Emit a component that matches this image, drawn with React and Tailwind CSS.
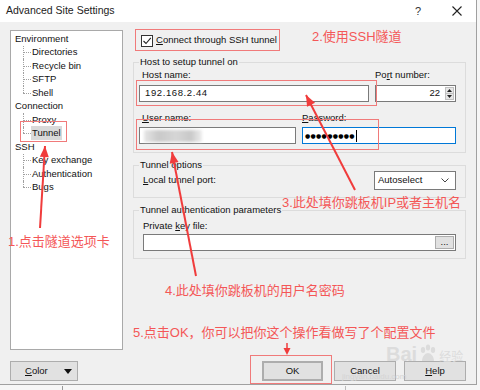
import React from "react";

const tree = [
  { label: "Environment", level: 0 },
  { label: "Directories", level: 1 },
  { label: "Recycle bin", level: 1 },
  { label: "SFTP", level: 1 },
  { label: "Shell", level: 1, last: true },
  { label: "Connection", level: 0 },
  { label: "Proxy", level: 1 },
  { label: "Tunnel", level: 1, last: true, selected: true },
  { label: "SSH", level: 0 },
  { label: "Key exchange", level: 1 },
  { label: "Authentication", level: 1 },
  { label: "Bugs", level: 1, last: true },
];

// arrow = line + filled head, pointing from -> to
const arrowHead = (x1, y1, x2, y2, len = 11, half = 4.5) => {
  const dx = x2 - x1;
  const dy = y2 - y1;
  const d = Math.hypot(dx, dy);
  const ux = dx / d;
  const uy = dy / d;
  const bx = x2 - ux * len;
  const by = y2 - uy * len;
  return `${x2},${y2} ${bx - uy * half},${by + ux * half} ${bx + uy * half},${by - ux * half}`;
};

const arrows = [
  [40, 228, 45, 146],
  [355, 190, 306, 95],
  [196, 276, 172, 152],
];

const Group = ({ title, className = "", children }) => (
  <div className={`relative border border-[#dcdcdc] ${className}`}>
    <span className="absolute left-[5px] top-[-7px] bg-[#f0f0f0] px-[1px] leading-[12px]">{title}</span>
    {children}
  </div>
);

const Btn = ({ children, className = "" }) => (
  <div className={`flex h-[20px] items-center justify-center border border-[#adadad] bg-[#e1e1e1] ${className}`}>
    {children}
  </div>
);

export default function App() {
  return (
    <div className="relative h-[390px] w-[480px] overflow-hidden bg-[#f6f6f6] font-['Liberation_Sans',Arial,sans-serif] text-[9.5px] text-[#111]">
      <div className="flex h-[385px] w-[477px] flex-col border-r border-b border-[#a0a0a0] bg-[#f0f0f0]">
        {/* Title bar */}
        <div className="flex h-[22px] items-center bg-white pl-[6px] pr-[14px]">
          <span className="text-[10.5px] text-[#222]">Advanced Site Settings</span>
          <span className="ml-auto mr-[31px] text-[11px] text-[#333]">?</span>
          <svg width="10" height="10" viewBox="0 0 10 10">
            <path d="M0.5 0.5 L9.5 9.5 M9.5 0.5 L0.5 9.5" stroke="#222" strokeWidth="1.1" />
          </svg>
        </div>

        <div className="flex flex-col px-[10px] pt-[8px]">
          <div className="flex gap-[10px]">
            {/* Tree */}
            <div className="h-[320px] w-[115px] border border-[#a9a9a9] bg-white pl-[4px] pt-[1px]">
              {tree.map((t) =>
                t.level === 0 ? (
                  <div key={t.label} className="flex h-[13.5px] items-center">
                    {t.label}
                  </div>
                ) : (
                  <div key={t.label} className="flex h-[13.5px] items-center">
                    <span className="relative ml-[8px] h-full w-[8px]">
                      <span
                        className={`absolute left-0 top-0 border-l border-dotted border-[#a0a0a0] ${
                          t.last ? "h-1/2" : "h-full"
                        }`}
                      />
                      <span className="absolute left-0 top-1/2 w-full border-t border-dotted border-[#a0a0a0]" />
                    </span>
                    <span className={`px-[1px] ${t.selected ? "bg-[#d9d9d9]" : ""}`}>{t.label}</span>
                  </div>
                )
              )}
            </div>

            {/* Right column */}
            <div className="flex w-[333px] flex-col">
              <div className="flex h-[21px] items-center pl-[8px]">
                <span className="flex h-[12px] w-[12px] items-center justify-center border border-[#333] bg-white">
                  <svg width="10" height="10" viewBox="0 0 10 10">
                    <path d="M1.5 5 L4 7.5 L8.8 1.8" fill="none" stroke="#222" strokeWidth="1.1" />
                  </svg>
                </span>
                <span className="ml-[3px]">
                  <u>C</u>onnect through SSH tunnel
                </span>
              </div>

              <Group title="Host to setup tunnel on" className="mt-[11px] pl-[5px] pr-[9px] pt-[6px] pb-[8px]">
                <div className="flex gap-[6px]">
                  <div className="flex w-[230px] flex-col">
                    <span className="h-[12px] pl-[3px] leading-[12px]">Host name:</span>
                    <div className="mt-[4px] flex h-[17px] items-center border border-[#7a7a7a] bg-white pl-[5px] tracking-[0.6px]">
                      192.168.2.44
                    </div>
                  </div>
                  <div className="flex w-[81px] flex-col">
                    <span className="h-[12px] leading-[12px]">
                      Po<u>r</u>t number:
                    </span>
                    <div className="mt-[4px] flex h-[17px] items-center border border-[#7a7a7a] bg-white pr-[1px]">
                      <span className="ml-auto mr-[5px]">22</span>
                      <div className="flex h-[13px] w-[9px] flex-col border border-[#c0c0c0] bg-[#e6e6e6]">
                        <div className="flex flex-1 items-center justify-center border-b border-[#c0c0c0]">
                          <svg width="5" height="3" viewBox="0 0 5 3">
                            <path d="M0 3 L2.5 0 L5 3 Z" fill="#222" />
                          </svg>
                        </div>
                        <div className="flex flex-1 items-center justify-center">
                          <svg width="5" height="3" viewBox="0 0 5 3">
                            <path d="M0 0 L2.5 3 L5 0 Z" fill="#222" />
                          </svg>
                        </div>
                      </div>
                    </div>
                  </div>
                </div>
                <div className="mt-[10px] flex gap-[6px]">
                  <div className="flex w-[157px] flex-col">
                    <span className="h-[12px] pl-[3px] leading-[12px]">
                      <u>U</u>ser name:
                    </span>
                    <div className="mt-[3px] flex h-[17px] items-center border border-[#7a7a7a] bg-white pl-[4px]">
                      <div className="h-[12px] w-[58px] bg-[linear-gradient(90deg,#e6e6e6,#c9c9c9_25%,#d6d6d6_55%,#c8c8c8_80%,#eeeeee)] blur-[1.5px]" />
                    </div>
                  </div>
                  <div className="flex w-[154px] flex-col">
                    <span className="h-[12px] leading-[12px]">
                      <u>P</u>assword:
                    </span>
                    <div className="mt-[3px] flex h-[17px] items-center border border-[#0078d7] bg-white pl-[2px]">
                      <span className="font-['DejaVu_Sans'] text-[6px] tracking-[0.3px] text-black">●●●●●●●●●</span>
                      <span className="ml-[1px] h-[12px] w-[1px] bg-black" />
                    </div>
                  </div>
                </div>
              </Group>

              <Group title="Tunnel options" className="mt-[12px] pl-[9px] pr-[9px] pt-[5px] pb-[7px]">
                <div className="flex items-center">
                  <span>
                    <u>L</u>ocal tunnel port:
                  </span>
                  <div className="ml-auto flex h-[19px] w-[82px] items-center border border-[#7a7a7a] bg-white pl-[3px] pr-[6px]">
                    Autoselect
                    <svg className="ml-auto" width="8" height="5" viewBox="0 0 8 5">
                      <path d="M0.5 0.5 L4 4 L7.5 0.5" fill="none" stroke="#444" strokeWidth="1" />
                    </svg>
                  </div>
                </div>
              </Group>

              <Group title="Tunnel authentication parameters" className="mt-[12px] pl-[9px] pr-[9px] pt-[9px] pb-[7px]">
                <span className="block h-[12px] leading-[12px]">
                  Private <u>k</u>ey file:
                </span>
                <div className="mt-[2px] flex h-[17px] items-center border border-[#7a7a7a] bg-white pr-[1px]">
                  <div className="ml-auto flex h-[13px] w-[19px] items-end justify-center border border-[#adadad] bg-[#e1e1e1] pb-[2px] leading-none">
                    ...
                  </div>
                </div>
              </Group>
            </div>
          </div>

          {/* Buttons */}
          <div className="mt-[11px] flex items-center">
            <Btn className="w-[68px] justify-start pl-[14px]">
              <span>
                <u>C</u>olor
              </span>
              <svg className="ml-auto mr-[5px]" width="8" height="5" viewBox="0 0 8 5">
                <path d="M0 0 L8 0 L4 5 Z" fill="#111" />
              </svg>
            </Btn>
            <Btn className="ml-auto w-[61px] border-2 border-[#0078d7]">OK</Btn>
            <Btn className="ml-[11px] w-[62px]">Cancel</Btn>
            <Btn className="ml-[8px] w-[62px]">
              <span>
                <u>H</u>elp
              </span>
            </Btn>
          </div>
        </div>
      </div>

      {/* outside strip below dialog */}
      <div className="absolute left-[62px] top-[386px] h-[4px] w-px bg-[#999]" />
      <div className="absolute left-[345px] top-[386px] h-[4px] w-px bg-[#bbb]" />

      {/* Baidu watermark */}
      <div className="pointer-events-none absolute left-[386px] top-[344px] flex items-end gap-[1px] text-[#dcdcdc]">
        <span className="font-['Liberation_Sans'] text-[20px] font-bold leading-none">Bai</span>
        <svg width="20" height="20" viewBox="0 0 20 20" fill="#dcdcdc">
          <ellipse cx="5" cy="6" rx="2.2" ry="3" />
          <ellipse cx="10" cy="3.5" rx="2.2" ry="3" />
          <ellipse cx="15" cy="6" rx="2.2" ry="3" />
          <path d="M4 17 C4 12 7.5 9 10 9 C12.5 9 16 12 16 17 Z" />
        </svg>
        <span className="mb-[2px] font-['Noto_Sans_CJK_SC'] text-[12px] leading-none">经验</span>
      </div>
      <div className="pointer-events-none absolute left-[342px] top-[371px] text-[8px] text-[#d4d4d4]">jingyan.baidu.com</div>

      {/* Red highlight boxes */}
      <div className="absolute left-[135px] top-[29px] h-[22px] w-[145px] border border-[#f07a7a]" />
      <div className="absolute left-[136px] top-[80px] h-[26px] w-[241px] border border-[#f07a7a]" />
      <div className="absolute left-[136px] top-[119px] h-[31px] w-[243px] border border-[#f07a7a]" />
      <div className="absolute left-[20px] top-[121px] h-[21px] w-[47px] border border-[#f07a7a]" />
      <div className="absolute left-[250px] top-[355px] h-[29px] w-[82px] border border-[#f07a7a]" />

      {/* Annotations */}
      <div className="pointer-events-none absolute inset-0 font-['Liberation_Sans','Noto_Sans_CJK_SC',sans-serif] text-[13px] leading-[18px] text-[#f45757]">
        <span className="absolute left-[312px] top-[28px]">2.使用SSH隧道</span>
        <span className="absolute left-[282px] top-[194px]">3.此处填你跳板机IP或者主机名</span>
        <span className="absolute left-[8px] top-[233px]">1.点击隧道选项卡</span>
        <span className="absolute left-[165px] top-[282px]">4.此处填你跳板机的用户名密码</span>
        <span className="absolute left-[133px] top-[324px]">5.点击OK，你可以把你这个操作看做写了个配置文件</span>
      </div>

      <svg className="pointer-events-none absolute left-0 top-0" width="480" height="390">
        {arrows.map(([x1, y1, x2, y2], i) => (
          <g key={i}>
            <line x1={x1} y1={y1} x2={x2} y2={y2} stroke="#f03c3c" strokeWidth="2" />
            <polygon points={arrowHead(x1, y1, x2, y2)} fill="#f03c3c" />
          </g>
        ))}
        <line x1="287" y1="343" x2="287" y2="350" stroke="#f03c3c" strokeWidth="1.5" />
        <polygon points={arrowHead(287, 343, 287, 355, 7, 3.5)} fill="#f03c3c" />
      </svg>
    </div>
  );
}
